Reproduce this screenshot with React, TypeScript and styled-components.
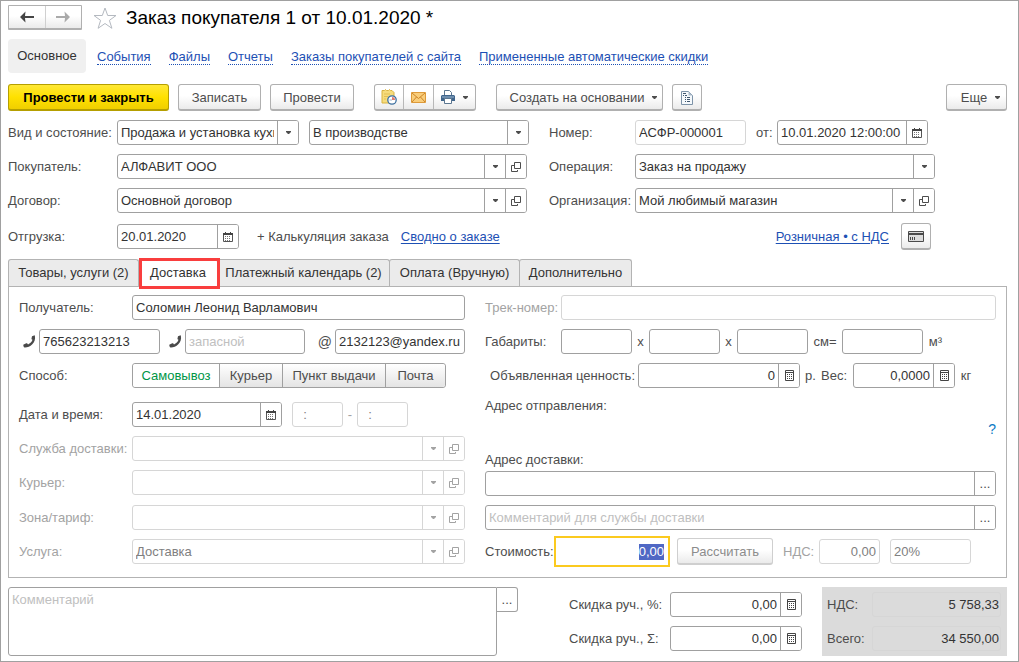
import React, { useEffect, useRef } from "react";
import styled, { createGlobalStyle, css } from "styled-components";

const color = {
  border: "#a0a0a0",
  borderSoft: "#d6d6d6",
  label: "#4d4d4d",
  text: "#333333",
  muted: "#a3a3a3",
  link: "#1d50b4",
};

const GlobalStyle = createGlobalStyle`
  *, *::before, *::after { box-sizing: border-box; }
  body { margin: 0; background: #fff; }
  body, button, input, select, textarea {
    font-family: "Liberation Sans", Arial, sans-serif;
    font-size: 13px;
    line-height: 16px;
  }
  ::selection { background: #5068c4; color: #fff; }
`;

const Page = styled.main`
  display: flex;
  flex-direction: column;
  width: 100%;
  min-height: 100vh;
  padding: 4px 11px 4px 7px;
  border: 1px solid ${color.border};
  color: ${color.label};
`;

const Header = styled.header`
  display: flex;
  align-items: center;
  height: 25px;
`;

const raised = css`
  border: 1px solid #b0b0b0;
  border-bottom: 2px solid #b0b0b0;
  border-radius: 3px;
  background: linear-gradient(#ffffff 45%, #ebebeb);
  color: ${color.label};
`;

const History = styled.div`
  ${raised}
  display: flex;
  width: 74px;
  height: 25px;
  border-radius: 1px;
`;

const HistoryButton = styled.button`
  display: flex;
  flex: 1;
  align-items: center;
  justify-content: center;
  padding: 0;
  border: 0;
  background: none;
  & + & { border-left: 1px solid #d0d0d0; }
`;

const StarButton = styled.button`
  display: flex;
  margin: 0 9px 0 11px;
  padding: 0;
  border: 0;
  background: none;
`;

const Title = styled.h1`
  margin: 0;
  color: #000;
  font-size: 19px;
  font-weight: 400;
  line-height: 24px;
`;

const Nav = styled.nav`
  display: flex;
  align-items: center;
  gap: 18px;
  height: 34px;
  margin-top: 9px;
`;

const NavCurrent = styled.span`
  width: 78px;
  margin-right: -7px;
  padding: 9px 0;
  border-radius: 4px;
  background: #f0f0f0;
  color: ${color.text};
  text-align: center;
`;

const NavLink = styled.a`
  padding-top: 1px;
  border-bottom: 1px dotted ${color.link};
  color: ${color.link};
  line-height: 15px;
  text-decoration: none;
`;

const Toolbar = styled.div`
  display: flex;
  gap: 9px;
  height: 27px;
  margin-top: 11px;
`;

const Button = styled.button<{ $width: number; $primary?: boolean; $menu?: boolean }>`
  ${raised}
  display: flex;
  align-items: center;
  justify-content: center;
  gap: 8px;
  width: ${(p) => p.$width}px;
  height: 27px;
  padding: 1px 0 0 ${(p) => (p.$menu ? 8 : 0)}px;
  white-space: nowrap;
  ${(p) =>
    p.$primary &&
    css`
      border-color: #b59f00;
      background: linear-gradient(#ffe836, #ffe100 50%, #f0cf00);
      color: #000;
      font-weight: 700;
    `}
  &:disabled { border-color: #cfcfcf; color: #8c8c8c; }
`;

const ButtonGroup = styled.div`
  ${raised}
  display: flex;
  margin: 0 11px;
`;

const GroupButton = styled.button<{ $width: number }>`
  display: flex;
  align-items: center;
  justify-content: center;
  gap: 8px;
  width: ${(p) => p.$width}px;
  padding: 0;
  border: 0;
  background: none;
  color: ${color.label};
  & + & { border-left: 1px solid #b8b8b8; }
`;

const Spacer = styled.div`
  flex: 1;
`;

const Columns = styled.div<{ $left: number; $right: number }>`
  display: grid;
  grid-template-columns: minmax(0, ${(p) => p.$left}fr) minmax(0, ${(p) => p.$right}fr);
  gap: 20px;
`;

const Stack = styled.div<{ $gap?: number }>`
  display: flex;
  flex-direction: column;
  gap: ${(p) => p.$gap ?? 9}px;
`;

const OrderForm = styled(Columns)`
  margin-top: 9px;
`;

const OrderRight = styled(Stack)`
  padding-right: 72px;
`;

const Row = styled.div<{ $inset?: number }>`
  display: flex;
  align-items: center;
  min-height: 25px;
  padding-right: ${(p) => p.$inset ?? 0}px;
`;

const Label = styled.label<{ $width?: number; $muted?: boolean; $align?: string }>`
  flex: none;
  width: ${(p) => (p.$width ? `${p.$width}px` : "auto")};
  color: ${(p) => (p.$muted ? color.muted : color.label)};
  text-align: ${(p) => p.$align ?? "left"};
  white-space: nowrap;
`;

const Unit = styled(Label).attrs({ as: "span" })``;

const Box = styled.div<{ $width?: number; $soft?: boolean }>`
  display: flex;
  flex: ${(p) => (p.$width ? "none" : "1")};
  width: ${(p) => (p.$width ? `${p.$width}px` : "auto")};
  min-width: 0;
  height: 25px;
  overflow: hidden;
  border: 1px solid ${(p) => (p.$soft ? color.borderSoft : color.border)};
  border-radius: 3px;
  background: #fff;
`;

const control = css`
  flex: 1;
  width: 100%;
  min-width: 0;
  margin: 0;
  padding: 0 3px;
  border: 0;
  outline: 0;
  background: none;
  color: ${color.text};
  &::placeholder { color: #c0c0c0; opacity: 1; }
  &:disabled { color: #808080; opacity: 1; }
`;

const Input = styled.input<{ $right?: boolean }>`
  ${control}
  text-align: ${(p) => (p.$right ? "right" : "left")};
`;

const SelectWrap = styled.div`
  display: grid;
  flex: 1;
  grid-template-columns: minmax(0, 1fr) 21px;
  min-width: 0;
`;

const Select = styled.select`
  ${control}
  grid-area: 1 / 1 / 2 / 3;
  padding-right: 24px;
  appearance: none;
`;

const SelectArrow = styled.span<{ $soft?: boolean }>`
  display: flex;
  grid-area: 1 / 2;
  align-items: center;
  justify-content: center;
  border-left: 1px solid ${(p) => (p.$soft ? color.borderSoft : color.border)};
  background: #fff;
  color: ${(p) => (p.$soft ? color.muted : color.label)};
  pointer-events: none;
`;

const InnerButton = styled.button<{ $soft?: boolean }>`
  display: flex;
  flex: none;
  align-items: center;
  justify-content: center;
  width: 21px;
  padding: 0;
  border: 0;
  border-left: 1px solid ${(p) => (p.$soft ? color.borderSoft : color.border)};
  background: #fff;
  color: ${(p) => (p.$soft ? color.muted : color.label)};
`;

const ShipmentRow = styled.div`
  display: flex;
  align-items: center;
  height: 27px;
  margin-top: 10px;
  padding-right: 76px;
`;

const PlainButton = styled.button`
  margin: 0 12px 0 18px;
  padding: 0;
  border: 0;
  background: none;
  color: ${color.label};
`;

const Link = styled.a`
  margin-right: 12px;
  color: ${color.link};
  text-decoration: underline;
  text-underline-offset: 2px;
`;

const Tabs = styled.div`
  display: flex;
  height: 27px;
  margin-top: 9px;
`;

const Tab = styled.button<{ $width: number; $active?: boolean }>`
  position: relative;
  width: ${(p) => p.$width}px;
  margin-left: -1px;
  padding: 0;
  border: 1px solid #b3b3b3;
  border-bottom: 0;
  border-radius: 3px 3px 0 0;
  background: #ebebeb;
  color: ${color.text};
  white-space: nowrap;
  &:first-child { margin-left: 0; }
  ${(p) =>
    p.$active &&
    css`
      background: #fff;
      &::after {
        content: "";
        position: absolute;
        z-index: 1;
        inset: -2px -3px -3px 0;
        border: 3px solid #f93e3e;
      }
    `}
`;

const Panel = styled.section`
  padding: 8px 10px 10px;
  border: 1px solid #b3b3b3;
`;

const IconLabel = styled.label<{ $width: number }>`
  display: flex;
  flex: none;
  justify-content: flex-end;
  width: ${(p) => p.$width}px;
  padding-right: 3px;
  font-size: 14px;
`;

const Segments = styled.fieldset`
  display: flex;
  height: 25px;
  margin: 0;
  padding: 0;
  overflow: hidden;
  border: 1px solid ${color.border};
  border-radius: 3px;
`;

const Segment = styled.label<{ $width: number }>`
  display: flex;
  align-items: center;
  justify-content: center;
  width: ${(p) => p.$width}px;
  background: linear-gradient(#ffffff, #e4e4e4);
  color: ${color.label};
  & + & { border-left: 1px solid ${color.border}; }
  &:has(:checked) { background: #fff; color: #009646; }
`;

const SegmentRadio = styled.input`
  appearance: none;
  width: 0;
  height: 0;
  margin: 0;
`;

const AddressBlock = styled.div`
  display: flex;
  flex-direction: column;
  margin: 10px 0 3px;
`;

const HelpButton = styled.button`
  align-self: flex-end;
  margin: 7px 0 15px;
  padding: 0;
  border: 0;
  background: none;
  color: #0d7ac4;
  font-size: 14px;
`;

const CostRow = styled.div`
  display: flex;
  align-items: center;
  height: 31px;
  margin-top: 6px;
`;

const CostBox = styled.div`
  display: flex;
  flex: none;
  width: 116px;
  height: 31px;
  margin-right: 7px;
  padding: 0 1px;
  border: 2px solid #fbca1f;
`;

const Footer = styled.div`
  display: flex;
  margin-top: 9px;
`;

const Comment = styled.div`
  display: flex;
  flex: 1;
  align-items: flex-start;
`;

const CommentArea = styled.textarea`
  ${control}
  height: 69px;
  padding: 4px 3px;
  border: 1px solid ${color.border};
  border-radius: 3px 0 3px 3px;
  resize: none;
`;

const CommentButton = styled.button`
  width: 21px;
  height: 25px;
  padding: 0;
  border: 1px solid ${color.border};
  border-left: 0;
  border-radius: 0 3px 3px 0;
  background: #fff;
  color: ${color.label};
`;

const Discounts = styled(Stack)`
  margin: 0 20px 0 51px;
  padding: 5px 0;
`;

const Totals = styled(Stack)`
  width: 185px;
  padding: 5px 6px 5px 5px;
  background: #dbdbdb;
`;

const Total = styled.output`
  flex: 1;
  height: 25px;
  padding: 4px 1px;
  border: 1px solid #d6d6d6;
  border-radius: 3px;
  color: ${color.text};
  text-align: right;
`;

const Caret = () => (
  <svg width="5" height="3" viewBox="0 0 5 3" aria-hidden="true">
    <path d="M0 0h5v1L3 3H2L0 1z" fill="currentColor" />
  </svg>
);

const OpenIcon = () => (
  <svg width="10" height="10" viewBox="0 0 10 10" fill="none" stroke="currentColor" aria-hidden="true">
    <path d="M3.5.5h6v6h-6zM3 3.5H.5v6h6V8" />
  </svg>
);

const CalendarIcon = () => (
  <svg width="10" height="10" viewBox="0 0 10 10" aria-hidden="true">
    <path d="M2 0h1v1h4V0h1v1h2v2H0V1h2z" fill="#444" />
    <path d="M.5 3v6.500h9V3" stroke="#555" fill="none" />
    <path d="M2 4h1v1H2zM4 4h1v1H4zM6 4h1v1H6zM2 6h1v1H2zM4 6h1v1H4zM6 6h1v1H6zM2 8h1v1H2zM4 8h1v1H4zM6 8h1v1H6z" fill="#777" />
  </svg>
);

const CalculatorIcon = () => (
  <svg width="9" height="11" viewBox="0 0 9 11" aria-hidden="true">
    <path d="M.5.5h8v10h-8z" stroke="#444" fill="none" />
    <path d="M1 2h7v1H1z" fill="#444" />
    <path d="M2 4h1v1H2zM4 4h1v1H4zM6 4h1v1H6zM2 6h1v1H2zM4 6h1v1H4zM6 6h1v1H6zM2 8h1v1H2zM4 8h1v1H4zM6 8h1v1H6z" fill="#444" />
  </svg>
);

const ArrowIcon = ({ flip, fill }: { flip?: boolean; fill: string }) => (
  <svg width="14" height="12" viewBox="0 0 14 12" aria-hidden="true">
    <path
      d={flip ? "M14 6 8.500.5 9 5H0v2h9l-.5 4.500z" : "M0 6 5.500.5 5 5h9v2H5l.5 4.500z"}
      fill={fill}
    />
  </svg>
);

const StarIcon = () => (
  <svg width="24" height="22" viewBox="0 0 24 22" fill="none" stroke="#b4b9c0" aria-hidden="true">
    <path d="M12 1l2.700 7.500h8.300l-6.600 4.900 2.500 7.900L12 16.500l-6.900 4.800 2.500-7.900L1 8.500h8.300z" />
  </svg>
);

const ReminderIcon = () => (
  <svg width="16" height="16" viewBox="0 0 16 16" aria-hidden="true">
    <path d="M1 1.500h2.500l1-1 1 1h2l1-1 1 1h1.500l2 2v10.500H1z" fill="#f6dc7c" stroke="#d9b23f" />
    <path d="M3 5h6M3 7.500h4M3 10h2" stroke="#e4bf52" />
    <circle cx="11" cy="11" r="4.200" fill="#fff" stroke="#3c6f9f" strokeWidth="1.300" />
    <path d="M11 11V8a3 3 0 0 1 3 3z" fill="#e07a70" />
    <path d="M8.500 11h2.500" stroke="#9ab4cc" />
  </svg>
);

const MailIcon = () => (
  <svg width="15" height="11" viewBox="0 0 15 11" aria-hidden="true">
    <path d="M.5.5h14v10H.5z" fill="#f9cd7a" stroke="#dd9a3a" />
    <path d="M1 1l6.500 5.500L14 1M1 10l4.500-5M14 10 9.500 5" fill="none" stroke="#cc8528" />
  </svg>
);

const PrinterIcon = () => (
  <svg width="14" height="14" viewBox="0 0 14 14" aria-hidden="true">
    <path d="M3.500 5V.5h5l2 2V5" fill="#fff" stroke="#5b7690" />
    <path d="M1 5h12l1 1v5H0V6z" fill="#3f658c" />
    <path d="M1 7h12" stroke="#9db8d0" />
    <path d="M3.500 8.500h7v5h-7z" fill="#fff" stroke="#5b7690" />
  </svg>
);

const ReportIcon = () => (
  <svg width="12" height="14" viewBox="0 0 12 14" aria-hidden="true">
    <path d="M.5.5h7l4 4v9H.5z" fill="#f5f9fc" stroke="#7d93a8" />
    <path d="M7.500.5v4h4z" fill="#a9bac9" />
    <path d="M2 2.500h3M2 4.500h1M4 4.500h2M4 6.500h1M6 6.500h3M4 8.500h1M6 8.500h3M4 10.500h1M6 10.500h3" stroke="#3f566e" />
  </svg>
);

const CardIcon = () => (
  <svg width="16" height="11" viewBox="0 0 16 11" aria-hidden="true">
    <path d="M.5.5h15v10H.5z" fill="#dcdcdc" stroke="#4a4a4a" />
    <path d="M1 2h14v2H1z" fill="#4a4a4a" />
    <path d="M2.500 6v3M4.500 6v3M6.500 6v3" stroke="#4a4a4a" />
  </svg>
);

const PhoneIcon = () => (
  <svg width="13" height="13" viewBox="0 0 13 13" aria-hidden="true">
    <path
      d="M9 1.200 11 .4c.5-.1.8.1.900.500.6 3-.3 6-2.600 8.300-2.200 2.200-5 3.300-7.600 3.200-.6 0-.9-.4-1.100-.9L.3 10.300c-.1-.4 0-.7.4-.9l2.600-1.100c.4-.2.7-.1 1 .2l.7 1c1-.4 2-1.100 2.800-1.900.8-.9 1.400-1.800 1.700-2.800l-.6-.4c-.4-.3-.5-.6-.4-1z"
      fill="#4a4a4a"
    />
  </svg>
);

type FieldProps = {
  id: string;
  value?: string;
  width?: number;
  disabled?: boolean;
  right?: boolean;
  placeholder?: string;
  aria?: string;
  button?: "calendar" | "calculator" | "more";
};

const buttonFace = {
  calendar: { icon: <CalendarIcon />, title: "Выбрать дату" },
  calculator: { icon: <CalculatorIcon />, title: "Калькулятор" },
  more: { icon: "...", title: "Выбрать" },
};

function Field({ id, value, width, disabled, right, placeholder, aria, button }: FieldProps) {
  return (
    <Box $width={width} $soft={disabled}>
      <Input
        id={id}
        defaultValue={value}
        disabled={disabled}
        placeholder={placeholder}
        aria-label={aria}
        $right={right}
      />
      {button && (
        <InnerButton type="button" aria-label={buttonFace[button].title}>
          {buttonFace[button].icon}
        </InnerButton>
      )}
    </Box>
  );
}

type ComboProps = {
  id: string;
  value?: string;
  width?: number;
  disabled?: boolean;
  open?: boolean;
  aria?: string;
};

function Combo({ id, value = "", width, disabled, open, aria }: ComboProps) {
  return (
    <Box $width={width} $soft={disabled}>
      <SelectWrap>
        <Select id={id} disabled={disabled} aria-label={aria} defaultValue={value}>
          <option value={value}>{value}</option>
        </Select>
        <SelectArrow $soft={disabled}>
          <Caret />
        </SelectArrow>
      </SelectWrap>
      {open && (
        <InnerButton type="button" $soft={disabled} disabled={disabled} aria-label="Открыть">
          <OpenIcon />
        </InnerButton>
      )}
    </Box>
  );
}

const Gap = styled.span`
  flex: none;
  width: 10px;
`;

const navLinks = ["События", "Файлы", "Отчеты", "Заказы покупателей с сайта", "Примененные автоматические скидки"];

const tabs = [
  { name: "Товары, услуги (2)", width: 131 },
  { name: "Доставка", width: 80 },
  { name: "Платежный календарь (2)", width: 173 },
  { name: "Оплата (Вручную)", width: 131 },
  { name: "Дополнительно", width: 113 },
];

const methods = [
  { name: "Самовывоз", width: 86 },
  { name: "Курьер", width: 63 },
  { name: "Пункт выдачи", width: 103 },
  { name: "Почта", width: 60 },
];

export default function App() {
  const costRef = useRef<HTMLInputElement>(null);

  useEffect(() => {
    costRef.current?.focus();
    costRef.current?.select();
  }, []);

  return (
    <>
      <GlobalStyle />
      <Page>
        <Header>
          <History>
            <HistoryButton type="button" aria-label="Назад">
              <ArrowIcon fill="#444" />
            </HistoryButton>
            <HistoryButton type="button" aria-label="Вперед">
              <ArrowIcon flip fill="#aaa" />
            </HistoryButton>
          </History>
          <StarButton type="button" aria-label="В избранное">
            <StarIcon />
          </StarButton>
          <Title>Заказ покупателя 1 от 10.01.2020 *</Title>
        </Header>

        <Nav>
          <NavCurrent>Основное</NavCurrent>
          {navLinks.map((name) => (
            <NavLink href="#" key={name}>
              {name}
            </NavLink>
          ))}
        </Nav>

        <Toolbar>
          <Button type="button" $width={161} $primary>
            Провести и закрыть
          </Button>
          <Button type="button" $width={83}>
            Записать
          </Button>
          <Button type="button" $width={84}>
            Провести
          </Button>
          <ButtonGroup>
            <GroupButton type="button" $width={28} aria-label="Напоминание">
              <ReminderIcon />
            </GroupButton>
            <GroupButton type="button" $width={30} aria-label="Отправить письмо">
              <MailIcon />
            </GroupButton>
            <GroupButton type="button" $width={42} aria-label="Печать">
              <PrinterIcon />
              <Caret />
            </GroupButton>
          </ButtonGroup>
          <Button type="button" $width={167} $menu>
            Создать на основании
            <Caret />
          </Button>
          <Button type="button" $width={30} aria-label="Отчет">
            <ReportIcon />
          </Button>
          <Spacer />
          <Button type="button" $width={61} $menu>
            Еще
            <Caret />
          </Button>
        </Toolbar>

        <OrderForm $left={521} $right={458}>
          <Stack>
            <Row>
              <Label $width={109} htmlFor="kind">Вид и состояние:</Label>
              <Combo id="kind" width={182} value="Продажа и установка кухни" />
              <Gap />
              <Combo id="state" value="В производстве" aria="Состояние" />
            </Row>
            <Row $inset={2}>
              <Label $width={109} htmlFor="buyer">Покупатель:</Label>
              <Combo id="buyer" value="АЛФАВИТ ООО" open />
            </Row>
            <Row $inset={2}>
              <Label $width={109} htmlFor="contract">Договор:</Label>
              <Combo id="contract" value="Основной договор" open />
            </Row>
          </Stack>
          <OrderRight>
            <Row>
              <Label $width={86} htmlFor="number">Номер:</Label>
              <Box $width={111} $soft>
                <Input id="number" readOnly defaultValue="АСФР-000001" />
              </Box>
              <Gap />
              <Label $width={21} htmlFor="date">от:</Label>
              <Field id="date" width={151} value="10.01.2020 12:00:00" button="calendar" />
            </Row>
            <Row>
              <Label $width={86} htmlFor="operation">Операция:</Label>
              <Combo id="operation" value="Заказ на продажу" />
            </Row>
            <Row>
              <Label $width={86} htmlFor="company">Организация:</Label>
              <Combo id="company" value="Мой любимый магазин" open />
            </Row>
          </OrderRight>
        </OrderForm>

        <ShipmentRow>
          <Label $width={109} htmlFor="shipment">Отгрузка:</Label>
          <Field id="shipment" width={122} value="20.01.2020" button="calendar" />
          <PlainButton type="button">+ Калькуляция заказа</PlainButton>
          <Link href="#">Сводно о заказе</Link>
          <Spacer />
          <Link href="#">Розничная • с НДС</Link>
          <Button type="button" $width={30} aria-label="Оплата картой">
            <CardIcon />
          </Button>
        </ShipmentRow>

        <Tabs role="tablist">
          {tabs.map((tab, i) => (
            <Tab
              type="button"
              role="tab"
              key={tab.name}
              aria-selected={i === 1}
              $width={tab.width}
              $active={i === 1}
            >
              {tab.name}
            </Tab>
          ))}
        </Tabs>

        <Panel role="tabpanel">
          <Columns $left={446} $right={511}>
            <Stack $gap={14}>
              <Stack>
                <Row>
                  <Label $width={113} htmlFor="recipient">Получатель:</Label>
                  <Field id="recipient" value="Соломин Леонид Варламович" />
                </Row>
                <Row>
                  <IconLabel $width={20} htmlFor="phone"><PhoneIcon /></IconLabel>
                  <Field id="phone" width={121} value="765623213213" aria="Телефон" />
                  <IconLabel $width={25} htmlFor="phone2"><PhoneIcon /></IconLabel>
                  <Field id="phone2" width={120} placeholder="запасной" aria="Запасной телефон" />
                  <IconLabel $width={30} htmlFor="email">@</IconLabel>
                  <Field id="email" value="2132123@yandex.ru" />
                </Row>
                <Row>
                  <Label $width={113} as="span">Способ:</Label>
                  <Segments aria-label="Способ">
                    {methods.map((m, i) => (
                      <Segment key={m.name} $width={m.width}>
                        <SegmentRadio type="radio" name="method" defaultChecked={i === 0} />
                        {m.name}
                      </Segment>
                    ))}
                  </Segments>
                </Row>
              </Stack>
              <Stack $gap={10}>
                <Stack>
                  <Row>
                    <Label $width={113} htmlFor="day">Дата и время:</Label>
                    <Field id="day" width={150} value="14.01.2020" button="calendar" />
                    <Gap />
                    <Field id="from" width={51} value="  :" disabled aria="Время с" />
                    <Unit $width={14} $align="center" $muted>-</Unit>
                    <Field id="till" width={51} value="  :" disabled aria="Время по" />
                  </Row>
                  <Row>
                    <Label $width={113} $muted htmlFor="service">Служба доставки:</Label>
                    <Combo id="service" disabled open />
                  </Row>
                  <Row>
                    <Label $width={113} $muted htmlFor="courier">Курьер:</Label>
                    <Combo id="courier" disabled open />
                  </Row>
                </Stack>
                <Stack>
                  <Row>
                    <Label $width={113} $muted htmlFor="zone">Зона/тариф:</Label>
                    <Combo id="zone" disabled open />
                  </Row>
                  <Row>
                    <Label $width={113} $muted htmlFor="item">Услуга:</Label>
                    <Combo id="item" value="Доставка" disabled open />
                  </Row>
                </Stack>
              </Stack>
            </Stack>

            <div>
              <Stack>
                <Row>
                  <Label $width={76} $muted htmlFor="track">Трек-номер:</Label>
                  <Field id="track" disabled />
                </Row>
                <Row>
                  <Label $width={76} htmlFor="length">Габариты:</Label>
                  <Field id="length" width={71} />
                  <Unit $width={17} $align="center">х</Unit>
                  <Field id="width" width={71} aria="Ширина" />
                  <Unit $width={17} $align="center">х</Unit>
                  <Field id="height" width={71} aria="Высота" />
                  <Unit $width={34} $align="center">см=</Unit>
                  <Field id="volume" width={81} aria="Объем" />
                  <Unit $width={25} $align="center">м³</Unit>
                </Row>
                <Row>
                  <Label $width={150} $align="right" htmlFor="declared">Объявленная ценность:</Label>
                  <Unit $width={3} />
                  <Field id="declared" width={162} value="0" right button="calculator" />
                  <Unit $width={21} $align="center">р.</Unit>
                  <Label $width={32} htmlFor="weight">Вес:</Label>
                  <Field id="weight" width={102} value="0,0000" right button="calculator" />
                  <Unit $width={22} $align="center">кг</Unit>
                </Row>
              </Stack>
              <AddressBlock>
                <Unit>Адрес отправления:</Unit>
                <HelpButton type="button">?</HelpButton>
                <Label htmlFor="address">Адрес доставки:</Label>
              </AddressBlock>
              <Stack>
                <Row>
                  <Field id="address" button="more" />
                </Row>
                <Row>
                  <Field
                    id="note"
                    placeholder="Комментарий для службы доставки"
                    aria="Комментарий для службы доставки"
                    button="more"
                  />
                </Row>
              </Stack>
              <CostRow>
                <Label $width={69} htmlFor="cost">Стоимость:</Label>
                <CostBox>
                  <Input id="cost" ref={costRef} defaultValue="0,00" $right />
                </CostBox>
                <Button type="button" $width={96} disabled>
                  Рассчитать
                </Button>
                <Gap />
                <Label $width={36} $muted htmlFor="vat">НДС:</Label>
                <Field id="vat" width={61} value="0,00" right disabled />
                <Gap />
                <Field id="rate" width={81} value="20%" disabled aria="Ставка НДС" />
              </CostRow>
            </div>
          </Columns>
        </Panel>

        <Footer>
          <Comment>
            <CommentArea placeholder="Комментарий" aria-label="Комментарий" />
            <CommentButton type="button" aria-label="Открыть комментарий">...</CommentButton>
          </Comment>
          <Discounts>
            <Row>
              <Label $width={101} htmlFor="percent">Скидка руч., %:</Label>
              <Field id="percent" width={132} value="0,00" right button="calculator" />
            </Row>
            <Row>
              <Label $width={101} htmlFor="sum">Скидка руч., Σ:</Label>
              <Field id="sum" width={132} value="0,00" right button="calculator" />
            </Row>
          </Discounts>
          <Totals>
            <Row>
              <Unit $width={45}>НДС:</Unit>
              <Total>5 758,33</Total>
            </Row>
            <Row>
              <Unit $width={45}>Всего:</Unit>
              <Total>34 550,00</Total>
            </Row>
          </Totals>
        </Footer>
      </Page>
    </>
  );
}
